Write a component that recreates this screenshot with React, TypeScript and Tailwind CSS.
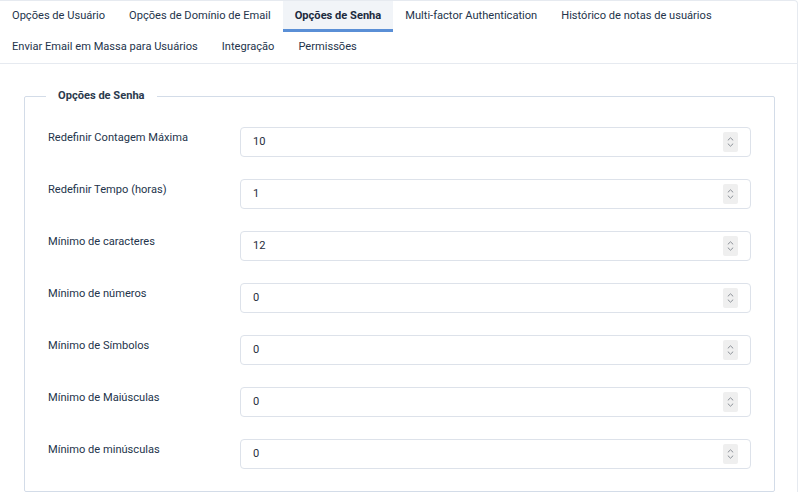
import { useState } from "react";

const tabsRowOne = [
  "Opções de Usuário",
  "Opções de Domínio de Email",
  "Opções de Senha",
  "Multi-factor Authentication",
  "Histórico de notas de usuários",
];
const tabsRowTwo = ["Enviar Email em Massa para Usuários", "Integração", "Permissões"];

const fields = [
  { label: "Redefinir Contagem Máxima", value: "10" },
  { label: "Redefinir Tempo (horas)", value: "1" },
  { label: "Mínimo de caracteres", value: "12" },
  { label: "Mínimo de números", value: "0" },
  { label: "Mínimo de Símbolos", value: "0" },
  { label: "Mínimo de Maiúsculas", value: "0" },
  { label: "Mínimo de minúsculas", value: "0" },
];

function Tab({ label, active, onClick }: { label: string; active: boolean; onClick: () => void }) {
  return (
    <button
      type="button"
      onClick={onClick}
      className={`h-[31px] border-b-[3px] px-3 pt-[2px] text-[11.1px] leading-[26px] whitespace-nowrap ${
        active
          ? "border-[#5a8fd6] bg-[#f1f4f8] font-bold text-[#1c2a3e]"
          : "border-transparent text-[#24344b]"
      }`}
    >
      {label}
    </button>
  );
}

function Spinner() {
  return (
    <span className="flex h-5 w-[15px] flex-col items-center justify-center gap-[2px] rounded-[2px] bg-[#efefef]">
      <svg width="7" height="4" viewBox="0 0 7 4" fill="none">
        <path d="M0.8 3.4 3.5 0.8 6.2 3.4" stroke="#8a8f96" strokeWidth="1" />
      </svg>
      <svg width="7" height="4" viewBox="0 0 7 4" fill="none">
        <path d="M0.8 0.6 3.5 3.2 6.2 0.6" stroke="#8a8f96" strokeWidth="1" />
      </svg>
    </span>
  );
}

export default function App() {
  const [active, setActive] = useState("Opções de Senha");
  const [values, setValues] = useState(fields.map((f) => f.value));

  return (
    <div
      className="h-[492px] w-[800px] overflow-hidden bg-white text-[#24344b]"
      style={{ fontFamily: "Roboto, 'Noto Sans', sans-serif" }}
    >
      <div className="mr-[2px] h-full rounded-tr-[4px] border-t border-r border-[#e6eaf0]">
        <div className="border-b border-[#e6eaf0]">
          <div className="flex">
            {tabsRowOne.map((t) => (
              <Tab key={t} label={t} active={active === t} onClick={() => setActive(t)} />
            ))}
          </div>
          <div className="flex">
            {tabsRowTwo.map((t) => (
              <Tab key={t} label={t} active={active === t} onClick={() => setActive(t)} />
            ))}
          </div>
        </div>

        <div className="pt-6 pr-[22px] pl-6">
          <fieldset className="rounded-[2px] border border-[#d3dce8] pr-[23px] pb-[22px] pl-[23px]">
            <legend className="ml-[-2px] px-3 text-[11.1px] leading-4 font-bold text-[#2b3a4d]">
              Opções de Senha
            </legend>
            <div className="mt-[23px] flex flex-col gap-[22px]">
              {fields.map((f, i) => (
                <div key={f.label} className="flex items-start">
                  <label className="w-[192px] shrink-0 pt-[1px] text-[11.1px] leading-5 text-[#24344b]">
                    {f.label}
                  </label>
                  <div className="flex h-[30px] flex-1 items-center rounded-[4px] border border-[#dde2ea] pr-3 pl-3">
                    <input
                      value={values[i]}
                      onChange={(e) => {
                        const next = [...values];
                        next[i] = e.target.value;
                        setValues(next);
                      }}
                      className="min-w-0 flex-1 bg-transparent text-[11.1px] text-[#1f2d3d] outline-none"
                    />
                    <Spinner />
                  </div>
                </div>
              ))}
            </div>
          </fieldset>
        </div>
      </div>
    </div>
  );
}
